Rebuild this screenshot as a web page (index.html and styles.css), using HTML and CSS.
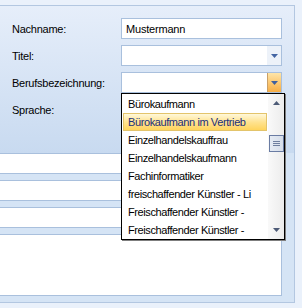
FILE: index.html
```html
<!DOCTYPE html>
<html>
<head>
<meta charset="utf-8">
<link rel="stylesheet" href="styles.css">
</head>
<body>
<div class="panel">
  <div class="top">
    <div class="row"><span class="label">Nachname:</span><div class="box"><span class="val">Mustermann</span></div></div>
    <div class="row"><span class="label">Titel:</span><div class="box"><span class="btn"><svg width="7" height="4" viewBox="0 0 7 4"><path d="M0 0h7L3.5 4z" fill="#4465a3"/></svg></span></div></div>
    <div class="row"><span class="label">Berufsbezeichnung:</span><div class="box"><span class="btn hot"><svg width="7" height="4" viewBox="0 0 7 4"><path d="M0 0h7L3.5 4z" fill="#3f5f9e"/></svg></span></div></div>
    <div class="row"><span class="label">Sprache:</span></div>
  </div>
  <div class="lower">
    <div class="field"></div>
    <div class="field"></div>
    <div class="field"></div>
    <div class="field big"></div>
  </div>
</div>
<div class="popup">
  <ul class="items">
    <li>Bürokaufmann</li>
    <li class="sel">Bürokaufmann im Vertrieb</li>
    <li>Einzelhandelskauffrau</li>
    <li>Einzelhandelskaufmann</li>
    <li>Fachinformatiker</li>
    <li>freischaffender Künstler - Li</li>
    <li>Freischaffender Künstler -</li>
    <li>Freischaffender Künstler -</li>
  </ul>
  <div class="scroll">
    <span class="arrow"><svg width="7" height="4" viewBox="0 0 7 4"><path d="M3.5 0L7 4H0z" fill="#4c5a76"/></svg></span>
    <div class="track"><span class="thumb"><i></i><i></i><i></i></span></div>
    <span class="arrow"><svg width="7" height="4" viewBox="0 0 7 4"><path d="M0 0h7L3.5 4z" fill="#4c5a76"/></svg></span>
  </div>
</div>
</body>
</html>
```
FILE: styles.css
```css
html, body {
  margin: 0;
  padding: 0;
}
body {
  background: #eaf1fb;
  font-family: "Liberation Sans", Arial, sans-serif;
  font-size: 11px;
  color: #000;
  padding-top: 5px;
  width: 302px;
  height: 303px;
  overflow: hidden;
  position: relative;
}
.panel {
  box-sizing: border-box;
  width: 295px;
  height: 298px;
  border: 1px solid #b3c7e1;
  border-left: none;
  display: flex;
  flex-direction: column;
}
.top {
  height: 147px;
  box-sizing: border-box;
  padding-top: 12px;
  background: linear-gradient(#e6eefa, #c8daf0);
  display: flex;
  flex-direction: column;
  gap: 6px;
}
.row {
  display: flex;
  align-items: center;
  height: 21px;
  padding-left: 12px;
}
.label {
  width: 109px;
  letter-spacing: -0.25px;
}
.box {
  box-sizing: border-box;
  width: 161px;
  height: 21px;
  background: #fff;
  border: 1px solid #a9c0dd;
  display: flex;
  align-items: center;
  justify-content: space-between;
}
.val {
  padding-left: 4px;
  letter-spacing: -0.2px;
}
.btn {
  margin-left: auto;
  width: 14px;
  height: 19px;
  background: #edf2f9;
  display: flex;
  align-items: center;
  justify-content: center;
}
.btn svg { display: block; margin-top: 1px; }
.btn.hot {
  box-sizing: border-box;
  width: 14px;
  background: linear-gradient(#fee5a9, #fbc66f 55%, #f7ad45);
  border-left: 1px solid #c9a068;
}
.lower {
  flex: 1;
  background: #d5e4f5;
  display: flex;
  flex-direction: column;
  gap: 6px;
  padding-bottom: 6px;
}
.field {
  box-sizing: border-box;
  width: 282px;
  height: 21px;
  background: #fff;
  border: 1px solid #a9c0dd;
  border-left: none;
}
.field.big {
  height: 62px;
}
.popup {
  position: absolute;
  left: 121px;
  top: 93px;
  box-sizing: border-box;
  width: 164px;
  height: 147px;
  background: #fff;
  border: 1px solid #000;
  box-shadow: 1px 1px 0 #7f7f7f;
  display: flex;
}
.items {
  list-style: none;
  margin: 0;
  padding: 1px 0 0 0;
  width: 146px;
}
.items li {
  box-sizing: border-box;
  height: 18px;
  line-height: 16px;
  margin: 0 1px;
  padding-left: 4px;
  border: 1px solid transparent;
  white-space: nowrap;
  overflow: hidden;
  letter-spacing: -0.4px;
}
.items li.sel {
  background: linear-gradient(#fff8da, #ffe391 50%, #ffd45d);
  border-color: #e3c46b;
  color: #1b2f7a;
}
.scroll {
  width: 16px;
  background: linear-gradient(90deg, #f9f9f9, #ececec);
  display: flex;
  flex-direction: column;
}
.arrow {
  height: 18px;
  display: flex;
  align-items: center;
  justify-content: center;
}
.arrow svg { display: block; }
.track {
  flex: 1;
  padding-top: 23px;
}
.thumb {
  box-sizing: border-box;
  display: flex;
  flex-direction: column;
  align-items: center;
  justify-content: center;
  gap: 1px;
  width: 15px;
  height: 17px;
  margin-left: 1px;
  border: 1px solid #6a7ca3;
  background: linear-gradient(90deg, #e5ebf4, #d5dde9);
}
.thumb i {
  display: block;
  width: 7px;
  height: 1px;
  background: #6f7f9f;
}
```
